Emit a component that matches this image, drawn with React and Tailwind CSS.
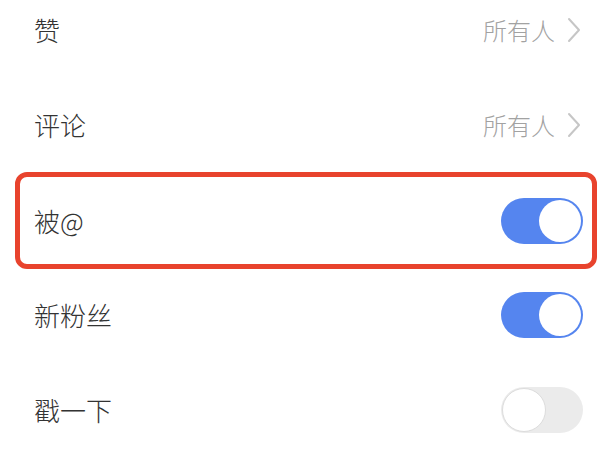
import React from 'react';

const font = { fontFamily: '"Noto Sans CJK SC", "Noto Sans", sans-serif' };

function Chevron() {
  return (
    <svg width="14" height="26" viewBox="0 0 14 26" fill="none" className="ml-[12px]">
      <path d="M2 2 L12 13 L2 24" stroke="#c6c6c6" strokeWidth="2" strokeLinecap="round" strokeLinejoin="round" />
    </svg>
  );
}

function Toggle({ on }) {
  return on ? (
    <div className="w-[82px] h-[46px] rounded-full bg-[#5585ef] flex items-center justify-end pr-[2px]">
      <div className="w-[42px] h-[42px] rounded-full bg-white"></div>
    </div>
  ) : (
    <div className="w-[82px] h-[46px] rounded-full bg-[#ebebeb] flex items-center pl-[1px]">
      <div className="w-[44px] h-[44px] rounded-full bg-white border border-[#dcdcdc]"></div>
    </div>
  );
}

function Row({ label, value, toggle }) {
  return (
    <div className="h-[95px] flex items-center justify-between pl-[34px] pr-[23px]">
      <span className="text-[26px] font-light text-[#333333] leading-none">{label}</span>
      {value ? (
        <div className="flex items-center pr-[2px]">
          <span className="text-[24px] font-light text-[#a2a2a2] leading-none">{value}</span>
          <Chevron />
        </div>
      ) : (
        <Toggle on={toggle} />
      )}
    </div>
  );
}

export default function App() {
  return (
    <div className="w-[606px] h-[460px] bg-white overflow-hidden select-none" style={font}>
      <div className="-mt-[18px] flex flex-col">
        <Row label="赞" value="所有人" />
        <Row label="评论" value="所有人" />
        <div className="ml-[15px] mr-[9px] h-[97px] border-[5px] border-[#e8432d] rounded-[12px] flex items-center justify-between pl-[14px] pr-[9px] mb-[-2px]">
          <span className="text-[26px] font-light text-[#333333] leading-none">被@</span>
          <Toggle on />
        </div>
        <Row label="新粉丝" toggle />
        <Row label="戳一下" toggle={false} />
      </div>
    </div>
  );
}
